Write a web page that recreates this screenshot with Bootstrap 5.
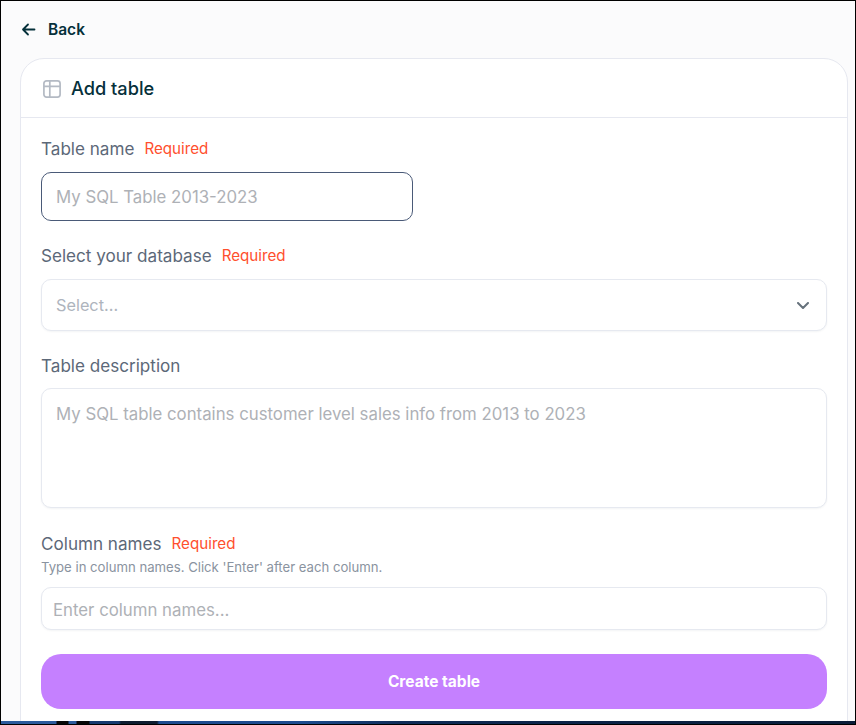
<!DOCTYPE html>
<html lang="en">
<head>
<meta charset="utf-8">
<title>Add table</title>
<link href="https://cdn.jsdelivr.net/npm/bootstrap@5.3.0/dist/css/bootstrap.min.css" rel="stylesheet">
<style>
html,body{height:725px;overflow:hidden;background:#000;}
body{font-family:Inter,"Liberation Sans",sans-serif;}
.frame-shell{height:720px;margin:1px 1px 0 1px;background:#fbfbfc;padding:0 7px 0 19px;overflow:hidden;}
.desk-strip{height:3px;margin:0 1px;background:linear-gradient(90deg,#2b5a9c 0,#2b5a9c 55px,#060606 56px,#060606 67px,#2b5a9c 68px,#2b5a9c 75px,#060606 76px,#060606 88px,#163a70 89px,#163a70 118px,#0d1c30 120px,#0d1c30 156px,#1c4c90 158px,#1c4c90 300px,#0f2c58 400px,#0b2348 560px,#0a1c38 856px);}
.back-row{height:57px;color:#05303a;font-size:15.5px;font-weight:600;gap:12px;padding-left:1px;}
.panel{background:#fff;border:1px solid #e6e8f0;border-radius:24px 24px 0 0;height:680px;}
.panel-head{height:59px;border-bottom:1px solid #e6e8f0;padding:2px 0 0 22px;gap:10px;font-size:18.2px;font-weight:500;color:#05303a;}
.panel-form{padding:20px 20px 0 20px;}
.lbl-row{gap:10px;}
.lbl{color:#5c6878;font-size:17.1px;line-height:22px;}
.req{color:#ff4f2e;font-size:15.2px;line-height:22px;}
.after-ctl{margin-top:24px;}
.to-ctl{margin-top:12px;}
.ctl{display:block;width:100%;background:#fff;border:1px solid #e6e9f0;border-radius:10px;font-size:16.8px;color:#333;outline:none;box-shadow:0 1px 2px rgba(20,30,60,.05);font-family:inherit;}
.ctl::placeholder{color:#aeb1b6;opacity:1;}
.name-ctl{width:372px;height:49px;border-color:#4a5a78;padding:0 14px;box-shadow:none;}
.sel-ctl{height:52px;padding:0 17px 0 14px;color:#aeb4bd;font-size:16.3px;}
.area-ctl{height:120px;padding:13px 14px;resize:none;margin-top:11px;}
.col-ctl{height:43px;padding:3px 11px 0;}
.col-head{margin-top:25px;}
.hint{color:#8a93a0;font-size:13.15px;line-height:16px;margin-top:4px;}
.make-btn{height:55px;border-radius:20px;background:#c580ff;color:#fff;font-weight:700;font-size:15.5px;border:0;width:100%;margin-top:24px;}
.make-btn:hover{background:#c580ff;color:#fff;}
</style>
</head>
<body>
<div class="frame-shell">
  <div class="back-row d-flex align-items-center">
    <svg width="15" height="15" viewBox="0 0 15 15" fill="none" stroke="#05303a" stroke-width="1.8" stroke-linecap="round" stroke-linejoin="round"><path d="M13.5 7.5H2M7 2.5l-5 5 5 5"/></svg>
    <span>Back</span>
  </div>
  <div class="panel">
    <div class="panel-head d-flex align-items-center">
      <svg width="18" height="18" viewBox="0 0 18 18" fill="none" stroke="#b4bac4" stroke-width="1.7"><rect x=".9" y=".9" width="16.2" height="16.2" rx="2.6"/><path d="M1 6.3h16M6.8 1v16"/></svg>
      <span>Add table</span>
    </div>
    <div class="panel-form">
      <div class="d-flex align-items-center lbl-row"><span class="lbl">Table name</span><span class="req">Required</span></div>
      <input class="ctl name-ctl to-ctl" placeholder="My SQL Table 2013-2023">
      <div class="d-flex align-items-center lbl-row after-ctl"><span class="lbl">Select your database</span><span class="req">Required</span></div>
      <div class="ctl sel-ctl d-flex align-items-center justify-content-between to-ctl">
        <span>Select...</span>
        <svg width="12" height="7" viewBox="0 0 12 7" fill="none" stroke="#66727c" stroke-width="2" stroke-linecap="round" stroke-linejoin="round"><path d="M1 1l5 5 5-5"/></svg>
      </div>
      <div class="after-ctl"><span class="lbl d-block">Table description</span></div>
      <textarea class="ctl area-ctl" placeholder="My SQL table contains customer level sales info from 2013 to 2023"></textarea>
      <div class="d-flex align-items-center lbl-row col-head"><span class="lbl">Column names</span><span class="req">Required</span></div>
      <div class="hint">Type in column names. Click 'Enter' after each column.</div>
      <input class="ctl col-ctl to-ctl" placeholder="Enter column names...">
      <button class="btn make-btn">Create table</button>
    </div>
  </div>
</div>
<div class="desk-strip"></div>
</body>
</html>
